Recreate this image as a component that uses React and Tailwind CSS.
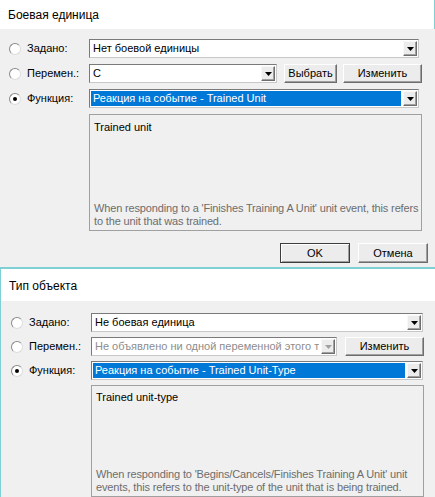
import React from "react";

function Arrow({ disabled }) {
  return (
    <svg width="7" height="4" viewBox="0 0 7 4">
      <path d="M0 0H7L3.5 4Z" fill={disabled ? "#a0a0a0" : "#000"} />
    </svg>
  );
}

function DropBtn({ disabled }) {
  return (
    <div className="flex h-full w-[14px] shrink-0 items-center justify-center border border-t-[#f8f8f8] border-l-[#f8f8f8] border-r-[#6d6d6d] border-b-[#6d6d6d] bg-[#ececec] shadow-[inset_-1px_-1px_0_#a0a0a0]">
      <Arrow disabled={disabled} />
    </div>
  );
}

function Combo({ text, selected, disabled, className }) {
  return (
    <div className={"flex h-[19px] border border-[#7a7a7a] border-r-[#c8c8c8] border-b-[#c8c8c8] bg-white p-[1px] " + className}>
      {selected ? (
        <div className="mr-[2px] flex flex-1 items-center overflow-hidden whitespace-nowrap bg-[#0078d7] pl-[2px] text-white">{text}</div>
      ) : disabled ? (
        <div className="mr-[2px] flex flex-1 items-center overflow-hidden whitespace-nowrap pl-[2px] text-[#8d8d8d]">{text}</div>
      ) : (
        <div className="mr-[2px] flex flex-1 items-center overflow-hidden whitespace-nowrap pl-[2px] text-black">{text}</div>
      )}
      <DropBtn disabled={disabled} />
    </div>
  );
}

function Btn({ children, className }) {
  return (
    <div className={"flex h-[19px] items-center justify-center border border-t-white border-l-white border-r-[#6d6d6d] border-b-[#6d6d6d] bg-[#ececec] shadow-[inset_-1px_-1px_0_#a0a0a0] " + className}>
      {children}
    </div>
  );
}

function Radio({ checked }) {
  return (
    <div className="flex h-[12px] w-[12px] shrink-0 items-center justify-center rounded-full border border-[#8a8a8a] border-b-[#dcdcdc] border-r-[#dcdcdc] bg-white">
      {checked ? <div className="h-[4px] w-[4px] rounded-full bg-black" /> : null}
    </div>
  );
}

function Row({ label, checked, children, pl }) {
  return (
    <div className={"flex h-[19px] items-center " + pl}>
      <Radio checked={checked} />
      <div className="ml-[6px] w-[62px] shrink-0 text-black">{label}</div>
      {children}
    </div>
  );
}

export default function App() {
  return (
    <div
      className="relative h-[497px] w-[435px] overflow-hidden bg-white text-[11px] leading-[13px]"
      style={{ fontFamily: '"Liberation Sans", Arial, sans-serif' }}
    >
      {/* Top dialog */}
      <div className="flex h-[267px] w-[435px] flex-col">
        <div className="flex h-[29px] items-center border-r border-r-[#7fd0d4] pl-[8px] pr-0 text-[12px] text-black">
          <span className="mt-[1px]">Боевая единица</span>
        </div>
        <div className="flex flex-1 flex-col bg-[#f0f0f0] pt-[10px]">
          <div className="flex flex-col gap-[6px]">
            <Row label="Задано:" pl="pl-[9px]">
              <Combo text="Нет боевой единицы" className="w-[330px]" />
            </Row>
            <Row label="Перемен.:" pl="pl-[9px]">
              <Combo text="С" className="w-[188px]" />
              <Btn className="ml-[7px] w-[53px]">Выбрать</Btn>
              <Btn className="ml-[6px] w-[79px]">Изменить</Btn>
            </Row>
            <Row label="Функция:" checked pl="pl-[9px]">
              <Combo text="Реакция на событие - Trained Unit" selected className="w-[330px]" />
            </Row>
          </div>
          <div className="ml-[89px] mt-[6px] flex h-[117px] w-[333px] flex-col justify-between border border-[#a0a0a0] pb-[2px] pl-[4px] pr-[2px] pt-[6px]">
            <div className="text-black">Trained unit</div>
            <div className="tracking-[-0.15px] text-[#6d6d6d]">
              When responding to a 'Finishes Training A Unit' unit event, this refers to the unit that was trained.
            </div>
          </div>
          <div className="mt-[12px] flex justify-end pr-[7px]">
            <div className="flex h-[20px] w-[70px] items-center justify-center border border-[#3c3c3c] bg-[#ececec] shadow-[inset_1px_1px_0_#fff,inset_-1px_-1px_0_#a0a0a0]">
              OK
            </div>
            <Btn className="ml-[8px] h-[20px] w-[70px]">Отмена</Btn>
          </div>
        </div>
      </div>

      {/* Bottom dialog */}
      <div className="flex h-[230px] w-[435px] flex-col border-l border-t-2 border-[#7fd0d4]">
        <div className="flex h-[32px] items-center pl-[8px] text-[12px] text-black">
          <span className="mt-[2px]">Тип объекта</span>
        </div>
        <div className="flex flex-1 flex-col bg-[#f0f0f0] pt-[12px]">
          <div className="flex flex-col gap-[5px]">
            <Row label="Задано:" pl="pl-[10px]">
              <Combo text="Не боевая единица" className="w-[332px]" />
            </Row>
            <Row label="Перемен.:" pl="pl-[10px]">
              <Combo text="Не объявлено ни одной переменной этого типа" disabled className="w-[246px]" />
              <Btn className="ml-[8px] w-[79px]">Изменить</Btn>
            </Row>
            <Row label="Функция:" checked pl="pl-[10px]">
              <Combo text="Реакция на событие - Trained Unit-Type" selected className="w-[332px]" />
            </Row>
          </div>
          <div className="ml-[90px] mt-[5px] flex h-[112px] w-[333px] flex-col justify-between border border-[#a0a0a0] pb-[2px] pl-[4px] pr-[2px] pt-[5px]">
            <div className="text-black">Trained unit-type</div>
            <div className="tracking-[-0.15px] text-[#6d6d6d]">
              When responding to 'Begins/Cancels/Finishes Training A Unit' unit events, this refers to the unit-type of the unit that is being trained.
            </div>
          </div>
        </div>
      </div>
    </div>
  );
}
